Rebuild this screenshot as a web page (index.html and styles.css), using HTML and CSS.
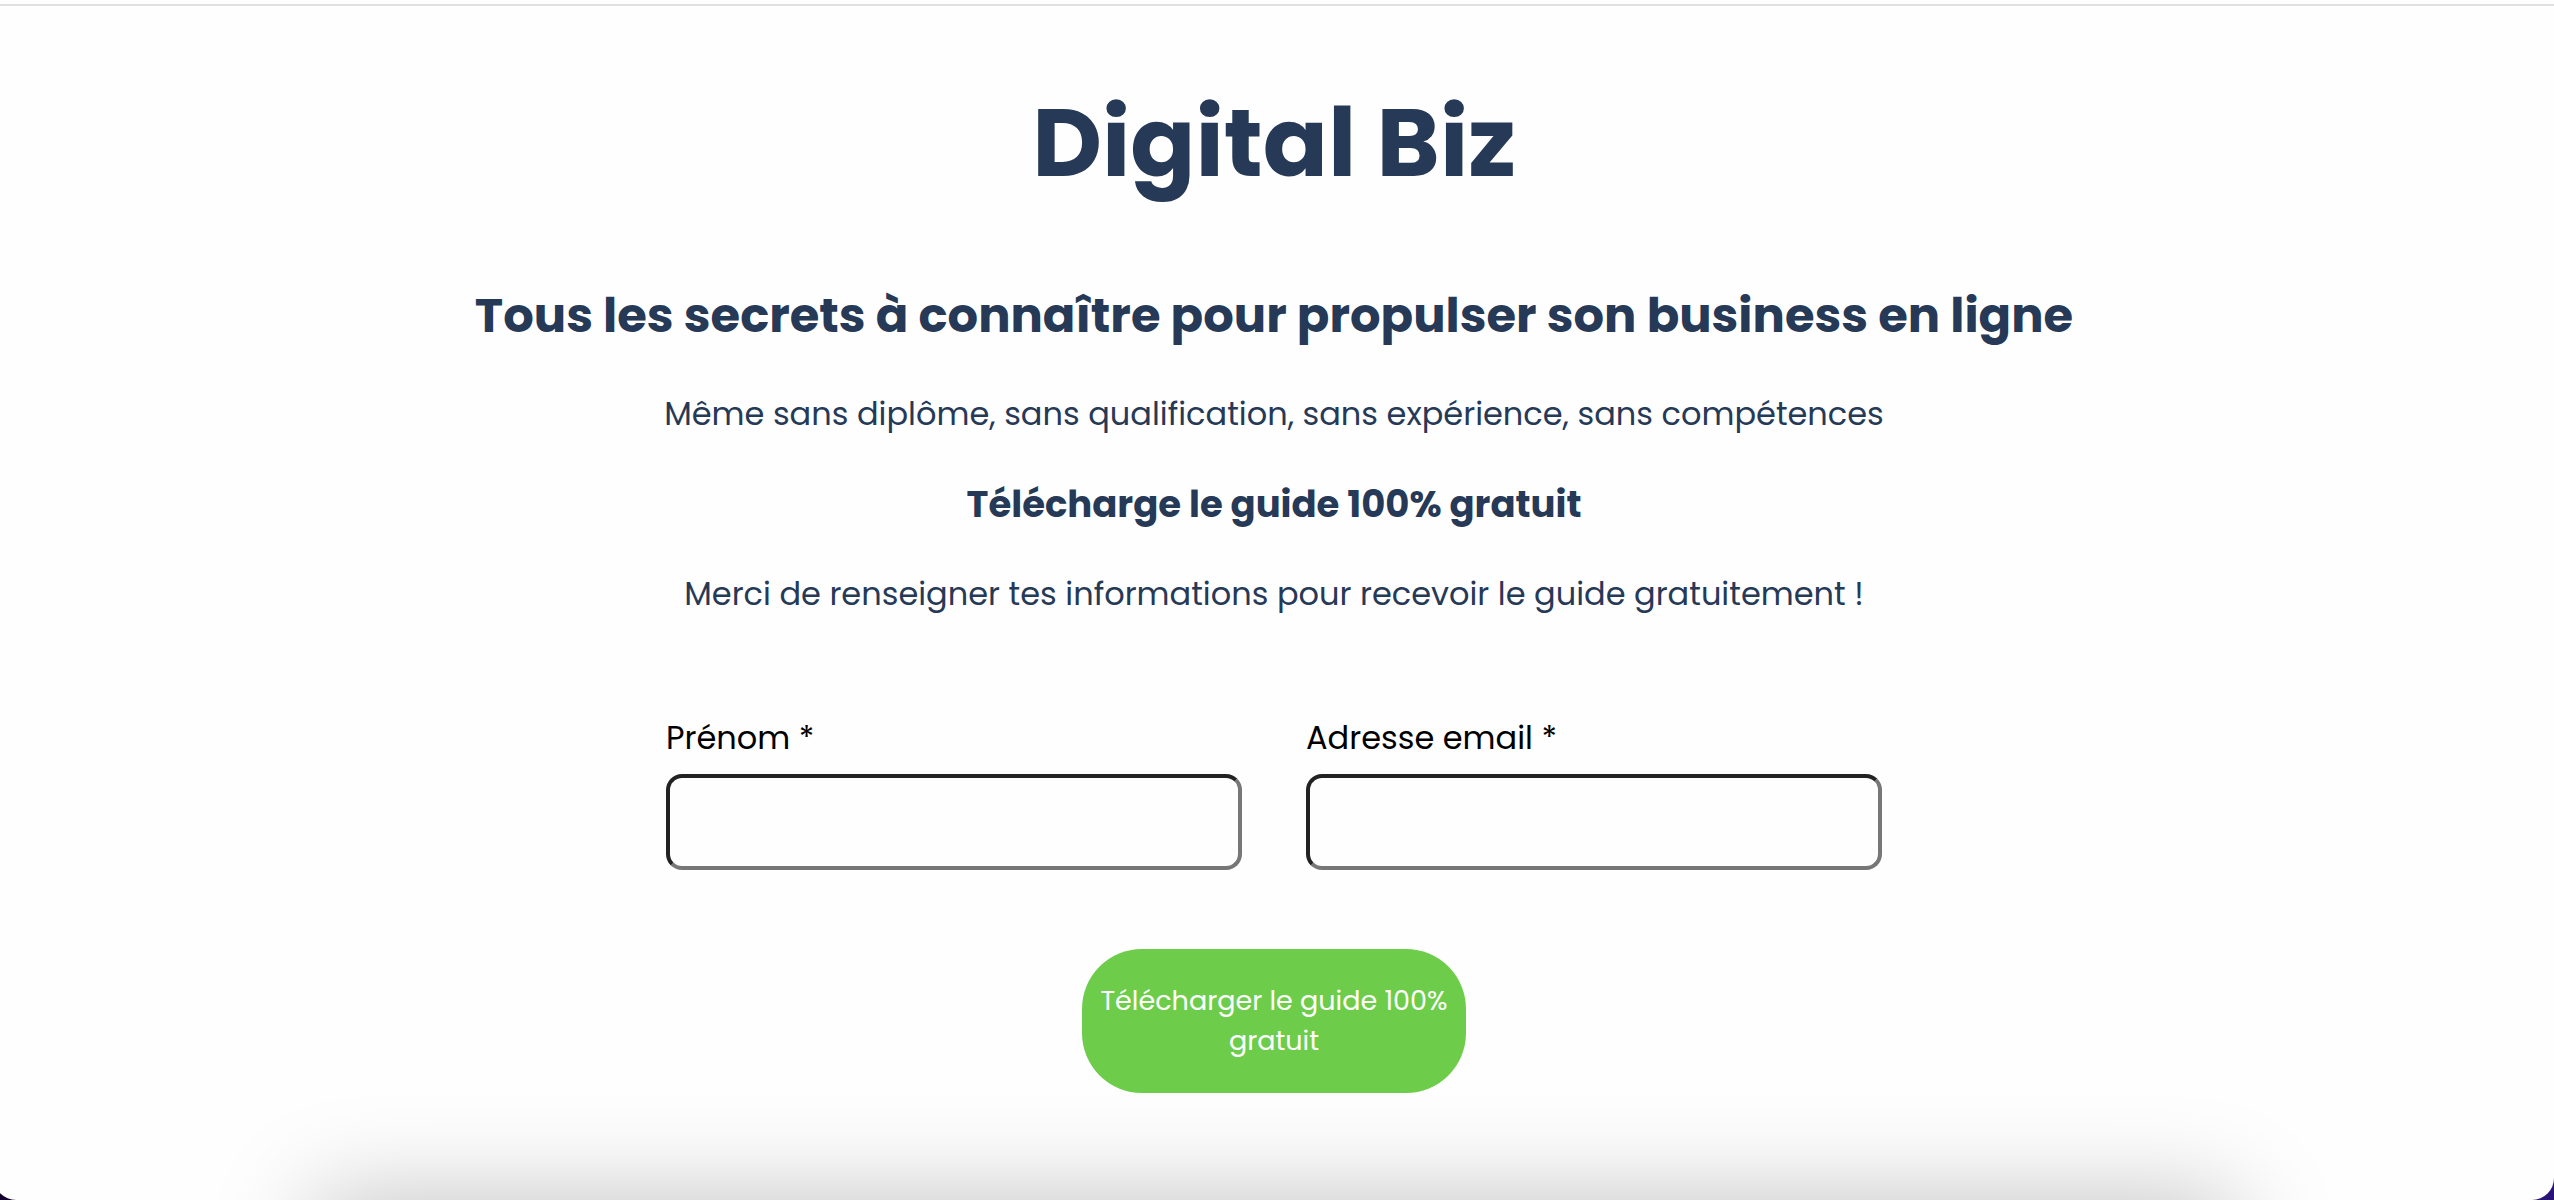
FILE: index.html
```html
<!DOCTYPE html>
<html lang="fr">
<head>
<meta charset="utf-8">
<meta name="viewport" content="width=device-width, initial-scale=1">
<title>Digital Biz</title>
<link rel="stylesheet" href="styles.css">
</head>
<body>
<div class="window">
  <main class="content">
    <h1 class="title">Digital Biz</h1>
    <h2 class="headline">Tous les secrets à connaître pour propulser son business en ligne</h2>
    <p class="text">Même sans diplôme, sans qualification, sans expérience, sans compétences</p>
    <h3 class="offer">Télécharge le guide 100% gratuit</h3>
    <p class="text">Merci de renseigner tes informations pour recevoir le guide gratuitement !</p>
    <form class="form">
      <div class="fields">
        <div class="field">
          <label for="prenom">Prénom *</label>
          <input id="prenom" type="text" required>
        </div>
        <div class="field">
          <label for="email">Adresse email *</label>
          <input id="email" type="email" required>
        </div>
      </div>
      <button class="submit" type="submit">Télécharger le guide 100% gratuit</button>
    </form>
  </main>
  <div class="card"></div>
</div>
</body>
</html>
```
FILE: styles.css
```css
* { box-sizing: border-box; }

body {
  margin: 0;
  background: linear-gradient(90deg, #12002e, #2a1478);
  font-family: Poppins, Inter, sans-serif;
  color: #263957;
}

.window {
  display: flex;
  flex-direction: column;
  height: 100vh;
  min-height: 600px;
  margin-left: -6px;
  padding-top: 4px;
  overflow: hidden;
  background: #fefefe;
  border-radius: 0 0 22px 22px;
}

.content {
  display: flex;
  flex-direction: column;
  align-items: center;
  flex: none;
  padding-top: 65px;
  border-top: 2px solid #e0e0e0;
  text-align: center;
}

.title {
  margin: 0 0 65px;
  font-size: 96px;
  line-height: 144px;
}

.headline {
  margin: 0 0 38px;
  font-size: 48px;
  line-height: 72px;
}

.text {
  margin: 0;
  font-size: 32px;
  line-height: 48px;
}

.offer {
  margin: 36px 0;
  font-size: 37px;
  line-height: 60px;
}

.form {
  display: flex;
  flex-direction: column;
  align-items: center;
  gap: 79px;
  width: 48%;
  max-width: 1216px;
  margin-top: 96px;
}

.fields {
  display: grid;
  grid-template-columns: 1fr 1fr;
  gap: 64px;
  width: 100%;
}

.field {
  display: flex;
  flex-direction: column;
  gap: 12px;
  color: #000;
  font-size: 32px;
  line-height: 48px;
  text-align: left;
}

.field input {
  width: 100%;
  height: 96px;
  padding: 0 16px;
  border: 4px solid;
  border-color: #222 #777 #777 #222;
  border-radius: 16px;
  background: #fefefe;
  font: inherit;
}

.submit {
  width: 384px;
  padding: 32px 16px;
  border: 0;
  border-radius: 60px;
  background: #6dcd4a;
  color: #fff;
  font: 27px/40px Poppins, Inter, sans-serif;
}

.card {
  flex: 1 0 100px;
  width: 75%;
  margin: 107px auto 0;
  box-shadow: 0 0 100px rgba(0, 0, 0, .25);
}
```
